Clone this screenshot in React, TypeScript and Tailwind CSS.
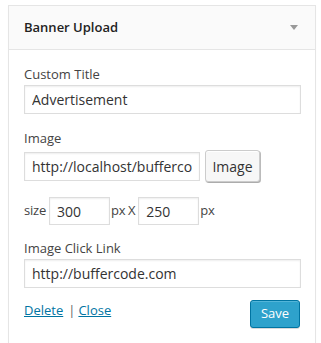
export default function App() {
  return (
    <div
      className="min-h-[343px] w-[321px] bg-white pt-[5px] pl-[8px] text-[#444] text-[13px]"
      style={{ fontFamily: '"Open Sans", sans-serif' }}
    >
      <div className="w-[308px] border border-[#e5e5e5] bg-white shadow-[0_1px_1px_rgba(0,0,0,0.04)]">
        {/* header */}
        <div className="flex h-[44px] items-center justify-between border-b border-[#e5e5e5] bg-[#fafafa] pl-[15px] pr-[17px]">
          <span className="text-[13px] font-semibold text-[#222]">Banner Upload</span>
          <span className="h-0 w-0 border-x-[4px] border-t-[5px] border-x-transparent border-t-[#999]" />
        </div>

        <div className="px-[15px] pb-[16px] pt-[15px]">
          <label className="block leading-[18px]">Custom Title</label>
          <input
            className="mt-[2px] block h-[29px] w-[277px] border border-[#ddd] px-[7px] text-[14px] text-[#333] shadow-[inset_0_1px_2px_rgba(0,0,0,0.07)] outline-none"
            defaultValue="Advertisement"
          />

          <label className="mt-[15px] block leading-[18px]">Image</label>
          <div className="mt-[3px] flex items-center">
            <input
              className="block h-[29px] w-[176px] border border-[#ddd] px-[7px] text-[14px] text-[#333] shadow-[inset_0_1px_2px_rgba(0,0,0,0.07)] outline-none"
              defaultValue="http://localhost/buffercode/wp-content/uploads/banner.png"
            />
            <button className="ml-[5px] h-[32px] w-[55px] rounded-[3px] border border-[#ccc] bg-[#f7f7f7] text-[14px] text-[#333] shadow-[inset_0_1px_0_#fff,0_1px_0_rgba(0,0,0,0.08),1px_1px_0_#bbb]">
              Image
            </button>
          </div>

          <div className="mt-[15px] flex items-center">
            <span className="tracking-[-0.2px]">size</span>
            <input
              className="ml-[3px] block h-[28px] w-[61px] border border-[#ddd] px-[7px] text-[14px] text-[#333] shadow-[inset_0_1px_2px_rgba(0,0,0,0.07)] outline-none"
              defaultValue="300"
            />
            <span className="ml-[1px] tracking-[-0.4px]">px X</span>
            <input
              className="ml-[3px] block h-[28px] w-[61px] border border-[#ddd] px-[7px] text-[14px] text-[#333] shadow-[inset_0_1px_2px_rgba(0,0,0,0.07)] outline-none"
              defaultValue="250"
            />
            <span className="ml-[1px]">px</span>
          </div>

          <label className="mt-[14px] block leading-[18px]">Image Click Link</label>
          <input
            className="mt-[2px] block h-[29px] w-[277px] border border-[#ddd] px-[7px] text-[14px] text-[#333] shadow-[inset_0_1px_2px_rgba(0,0,0,0.07)] outline-none"
            defaultValue="http://buffercode.com"
          />

          <div className="mt-[12px] flex items-start justify-between">
            <div className="pt-[1px] leading-[18px]">
              <a href="#" className="text-[#0074a2] underline">Delete</a>
              <span className="ml-[5px] mr-[3px] text-[#666]">|</span>
              <a href="#" className="text-[#0074a2] underline">Close</a>
            </div>
            <button className="h-[28px] w-[50px] rounded-[3px] border border-[#0074a2] bg-[#2ea2cc] text-[13px] text-white shadow-[inset_0_1px_0_rgba(120,200,230,0.5),0_1px_0_rgba(0,0,0,0.15)]">
              Save
            </button>
          </div>
        </div>
      </div>
    </div>
  );
}
